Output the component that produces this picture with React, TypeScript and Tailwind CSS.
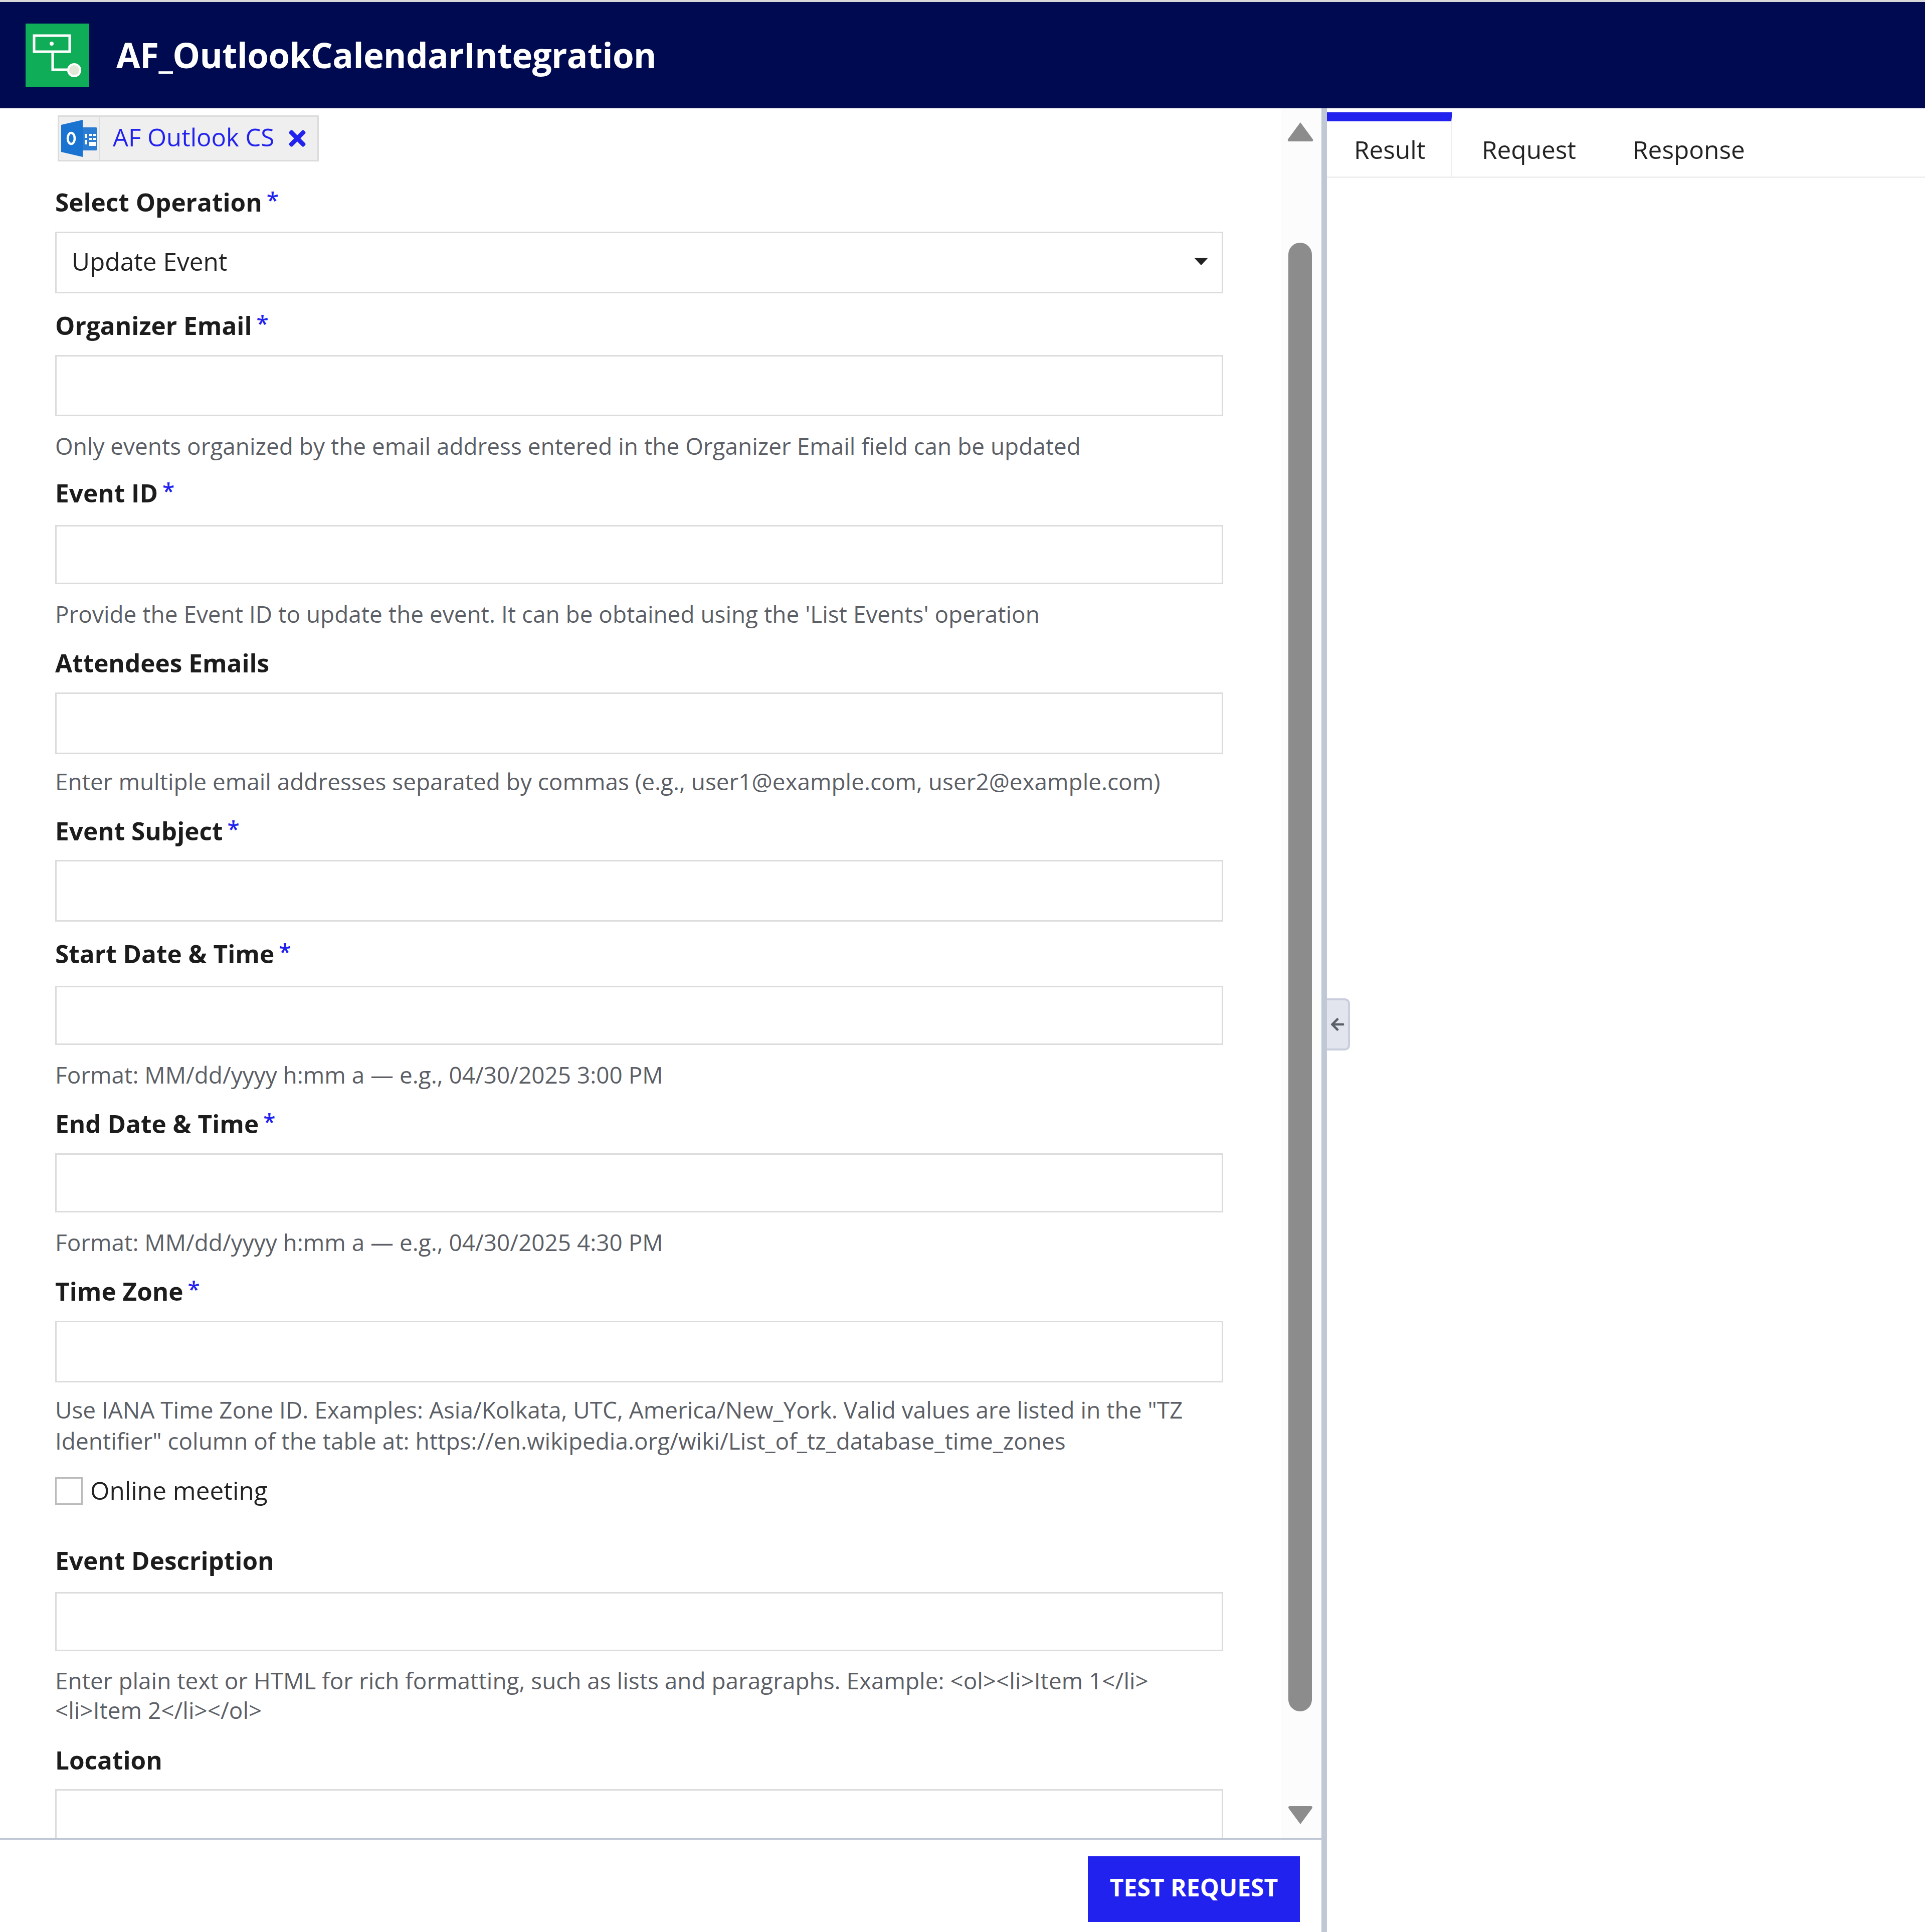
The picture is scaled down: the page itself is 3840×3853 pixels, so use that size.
import React from 'react';
import { FaTimes, FaArrowLeft } from 'react-icons/fa';

interface FieldProps {
  label: string;
  required?: boolean;
  help?: React.ReactNode;
  className?: string;
  inputClass?: string;
  helpClass?: string;
  children?: React.ReactNode;
}

function Field({ label, required, help, className, inputClass, helpClass, children }: FieldProps) {
  return (
    <div className={className}>
      <label className="flex h-[60px] items-center pb-[4px] text-[49.5px] leading-[56px] font-bold text-[#1c1c1c]">
        {label}
        {required && <span className="ml-[9px] self-start text-[44px] leading-[46px] font-semibold text-[#2222ee]">*</span>}
      </label>
      <div className={`flex items-center justify-between border-[3px] border-[#dcdcdc] bg-white ${inputClass}`}>
        {children}
      </div>
      {help && <div className={`text-[45.9px] leading-[62px] text-[#5c5f66] ${helpClass}`}>{help}</div>}
    </div>
  );
}

function AppLogo() {
  return (
    <svg viewBox="0 0 127 127" className="h-[127px] w-[127px] shrink-0">
      <rect width="127" height="127" fill="#10ad58" />
      <rect x="17" y="24" width="71" height="32" fill="none" stroke="#fff" strokeWidth="5" />
      <circle cx="52" cy="40" r="4" fill="#fff" />
      <path d="M54 56V92H86" fill="none" stroke="#fff" strokeWidth="5" />
      <circle cx="97" cy="93" r="12" fill="#dfe8d8" stroke="#fff" strokeWidth="4" />
    </svg>
  );
}

function OutlookIcon() {
  return (
    <svg viewBox="0 0 72 74" className="h-[74px] w-[72px]">
      <rect x="40" y="15" width="32" height="46" rx="3" fill="#2b7cd3" />
      <path d="M47 28h5v8h-5zM47 40h5v9h-5zM56 28h5v4h-5zM64 28h5v4h-5zM56 36h5v4h-5zM64 36h5v4h-5zM56 44h13v8H56z" fill="#fff" />
      <path d="M0 10L43 0V74L0 64Z" fill="#1a73d0" />
      <ellipse cx="20" cy="37" rx="7" ry="11" fill="none" stroke="#fff" strokeWidth="4.5" />
    </svg>
  );
}

export default function App() {
  return (
    <div className="flex h-[3853px] w-[3840px] flex-col overflow-hidden bg-white font-['Open_Sans',sans-serif]">
      {/* Header */}
      <header className="flex h-[216px] shrink-0 items-center gap-[54px] border-t-[4px] border-[#d8d8d8] bg-[#000a50] pl-[51px]">
        <AppLogo />
        <h1 className="text-[69px] font-bold tracking-[-0.55px] text-white">AF_OutlookCalendarIntegration</h1>
      </header>

      <div className="flex min-h-0 flex-1">
        {/* Left pane */}
        <div className="flex w-[2636px] shrink-0 flex-col">
          <div className="flex min-h-0 flex-1">
            <div className="min-w-0 flex-1 overflow-hidden pt-[14px] pr-[115px] pl-[110px]">
              <div className="ml-[5px] flex h-[92px] w-[521px] items-stretch border-[3px] border-[#dcdcdc] bg-[#efefef]">
                <div className="flex w-[82px] items-center justify-center border-r-[3px] border-[#dcdcdc]">
                  <OutlookIcon />
                </div>
                <div className="flex flex-1 items-center pb-[4px] pl-[25px] text-[49px] text-[#2222ee]">
                  AF Outlook CS
                  <FaTimes className="mt-[4px] ml-[26px] h-[48px] w-[40px]" />
                </div>
              </div>

              <Field label="Select Operation" required className="mt-[53px]" inputClass="mt-[27px] h-[123px] pr-[27px] pb-[4px] pl-[30px]">
                <span className="text-[49.5px] text-[#222]">Update Event</span>
                <span className="h-0 w-0 border-x-[14px] border-t-[15px] border-x-transparent border-t-[#222]" />
              </Field>
              <Field label="Organizer Email" required className="mt-[36px]" inputClass="mt-[27px] h-[122px]" helpClass="mt-[28px]" help="Only events organized by the email address entered in the Organizer Email field can be updated" />
              <Field label="Event ID" required className="mt-[35px]" inputClass="mt-[32px] h-[118px]" helpClass="mt-[28px]" help="Provide the Event ID to update the event. It can be obtained using the 'List Events' operation" />
              <Field label="Attendees Emails" className="mt-[39px]" inputClass="mt-[27px] h-[123px]" helpClass="mt-[23px]" help="Enter multiple email addresses separated by commas (e.g., user1@example.com, user2@example.com)" />
              <Field label="Event Subject" required className="mt-[40px]" inputClass="mt-[26px] h-[123px]" />
              <Field label="Start Date & Time" required className="mt-[36px]" inputClass="mt-[32px] h-[118px]" helpClass="mt-[28px]" help="Format: MM/dd/yyyy h:mm a — e.g., 04/30/2025 3:00 PM" />
              <Field label="End Date & Time" required className="mt-[39px]" inputClass="mt-[27px] h-[118px]" helpClass="mt-[28px]" help="Format: MM/dd/yyyy h:mm a — e.g., 04/30/2025 4:30 PM" />
              <Field
                label="Time Zone"
                required
                className="mt-[39px]"
                inputClass="mt-[27px] h-[123px]"
                helpClass="mt-[23px]"
                help={
                  <>
                    Use IANA Time Zone ID. Examples: Asia/Kolkata, UTC, America/New_York. Valid values are listed in the "TZ
                    <br />
                    Identifier" column of the table at: https://en.wikipedia.org/wiki/List_of_tz_database_time_zones
                  </>
                }
              />
              <div className="mt-[40px] flex items-center gap-[15px]">
                <span className="h-[55px] w-[55px] border-[3px] border-[#bbbbbb] bg-white" />
                <span className="pb-[2px] text-[49.5px] leading-[56px] text-[#222]">Online meeting</span>
              </div>
              <Field
                label="Event Description"
                className="mt-[82px]"
                inputClass="mt-[31px] h-[118px]"
                helpClass="mt-[29px]"
                help={
                  <div className="leading-[59px]">
                    {'Enter plain text or HTML for rich formatting, such as lists and paragraphs. Example: <ol><li>Item 1</li>'}
                    <br />
                    {'<li>Item 2</li></ol>'}
                  </div>
                }
              />
              <Field label="Location" className="mt-[42px]" inputClass="mt-[26px] h-[123px]" />
            </div>

            {/* Scrollbar */}
            <div className="flex w-[81px] shrink-0 flex-col items-center bg-[#fcfcfc] pt-[26px] pr-[4px]">
              <svg viewBox="0 0 54 42" className="h-[42px] w-[54px]">
                <path d="M27 2L52 36Q53 40 49 40H5Q1 40 2 36Z" fill="#8c8c8c" />
              </svg>
              <div className="mt-[200px] h-[2929px] w-[47px] rounded-[24px] bg-[#8c8c8c]" />
              <svg viewBox="0 0 54 42" className="mt-[187px] h-[40px] w-[54px]">
                <path d="M27 40L2 6Q1 2 5 2H49Q53 2 52 6Z" fill="#8c8c8c" />
              </svg>
            </div>
          </div>

          {/* Footer */}
          <div className="flex h-[188px] shrink-0 justify-end border-t-[4px] border-[#c0c8d6] bg-white pt-[33px] pr-[43px]">
            <button className="flex h-[131px] w-[423px] items-center justify-center bg-[#2222ee] pb-[8px] text-[48px] font-bold text-white uppercase">
              Test Request
            </button>
          </div>
        </div>

        {/* Splitter */}
        <div className="relative w-[11px] shrink-0 bg-[#c0c8d6]">
          <div className="absolute top-[1775px] left-[11px] flex h-[104px] w-[46px] items-center justify-center rounded-r-[10px] border-[4px] border-l-0 border-[#c8cedb] bg-[#e2e4ee] text-[#5a6068]">
            <FaArrowLeft className="h-[30px] w-[30px]" />
          </div>
        </div>

        {/* Right pane */}
        <div className="min-w-0 flex-1 pt-[8px]">
          <div className="flex h-[131px] border-b-[3px] border-[#eeeeee] text-[49.5px] text-[#222]">
            <div className="flex w-[250px] items-center border-t-[18px] border-r-[2px] border-t-[#2222ee] border-r-[#eeeeee] pt-[2px] pl-[54px]">
              Result
            </div>
            <div className="ml-[59px] flex items-center pt-[20px]">Request</div>
            <div className="ml-[113px] flex items-center pt-[20px]">Response</div>
          </div>
        </div>
      </div>
    </div>
  );
}
